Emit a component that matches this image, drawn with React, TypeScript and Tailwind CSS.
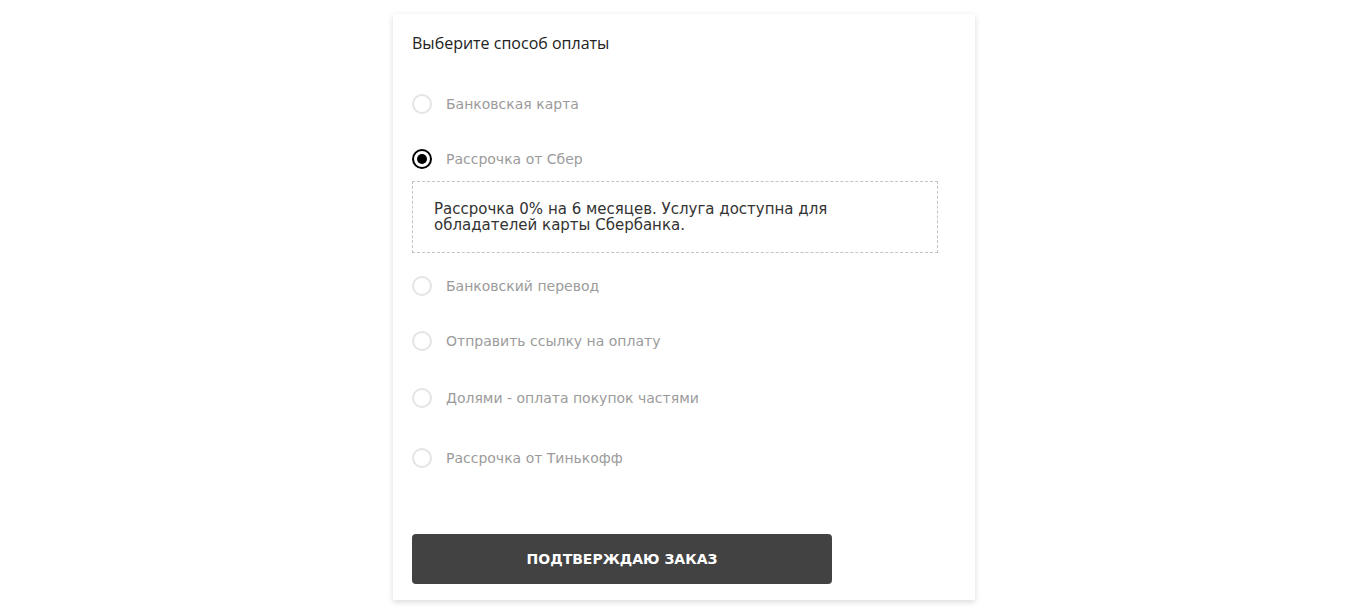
const options = [
  { label: "Банковская карта", mt: "mt-[39px]" },
  { label: "Рассрочка от Сбер", mt: "mt-[35px]", checked: true },
  { label: "Банковский перевод", mt: "mt-[23px]" },
  { label: "Отправить ссылку на оплату", mt: "mt-[35px]" },
  { label: "Долями - оплата покупок частями", mt: "mt-[37px]" },
  { label: "Рассрочка от Тинькофф", mt: "mt-[40px]" },
];

function Radio({ checked }: { checked?: boolean }) {
  if (checked) {
    return (
      <span className="flex h-5 w-5 items-center justify-center rounded-full border-2 border-black">
        <span className="h-[10px] w-[10px] rounded-full bg-black" />
      </span>
    );
  }
  return <span className="h-5 w-5 rounded-full border-2 border-[#e4e4e4]" />;
}

export default function App() {
  return (
    <div className="flex min-h-[614px] w-full justify-center bg-white">
      <div className="mt-[14px] mb-[14px] h-[586px] w-[582px] bg-white pl-[19px] pt-[17px] shadow-[0_2px_6px_rgba(0,0,0,0.15)]">
        <h2 className="h-6 text-[16px] leading-6 text-[#222] [font-family:'Open_Sans',sans-serif]">
          Выберите способ оплаты
        </h2>

        {options.map((o) => (
          <div key={o.label}>
            <label className={`${o.mt} flex h-5 items-center gap-[14px]`}>
              <Radio checked={o.checked} />
              <span className="text-[14px] text-[#9b9b9b] [font-family:'DejaVu_Sans',sans-serif]">
                {o.label}
              </span>
            </label>
            {o.checked && (
              <div className="mt-3 flex h-[72px] w-[526px] items-center border border-dashed border-[#c4c4c4] px-[21px]">
                <p className="text-[15px] leading-4 text-[#333] [font-family:'DejaVu_Sans',sans-serif]">
                  Рассрочка 0% на 6 месяцев. Услуга доступна для
                  <br />
                  обладателей карты Сбербанка.
                </p>
              </div>
            )}
          </div>
        ))}

        <button className="mt-[66px] flex h-[50px] w-[420px] items-center justify-center rounded bg-[#424242] text-[14px] font-bold uppercase text-white [font-family:'DejaVu_Sans',sans-serif]">
          Подтверждаю заказ
        </button>
      </div>
    </div>
  );
}
